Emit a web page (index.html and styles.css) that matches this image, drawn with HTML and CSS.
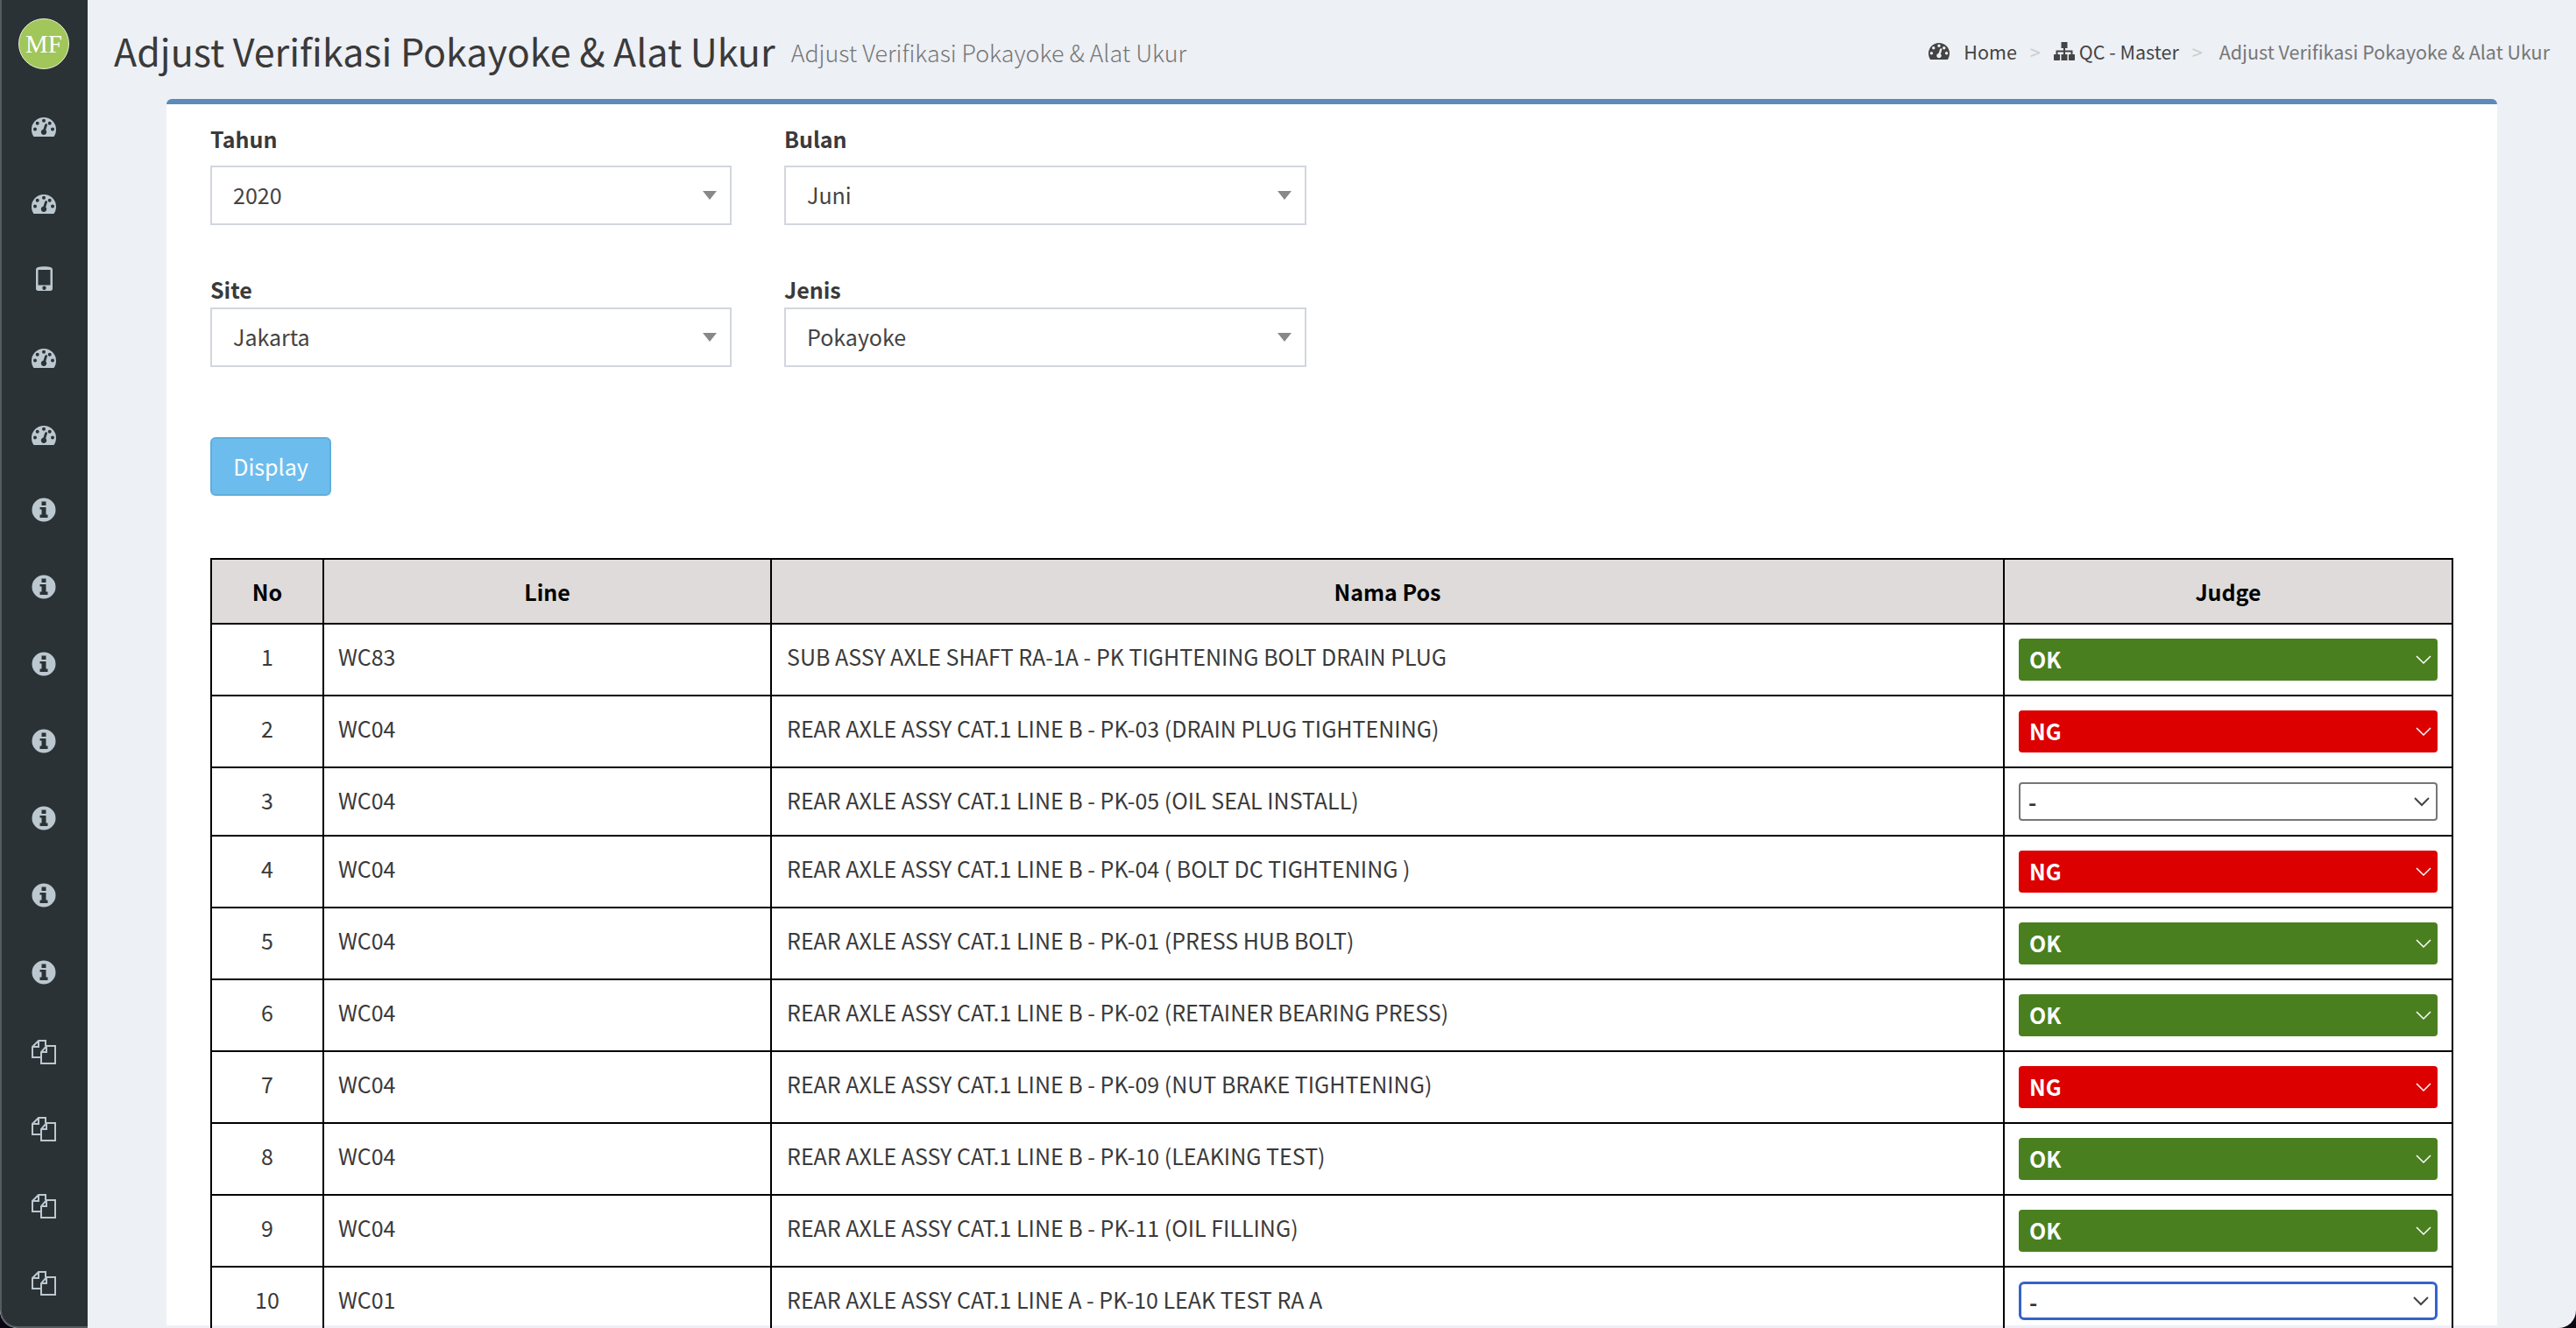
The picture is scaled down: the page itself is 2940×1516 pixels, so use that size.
FILE: index.html
```html
<!DOCTYPE html>
<html lang="en">
<head>
  <meta charset="UTF-8" />
  <title>Adjust Verifikasi Pokayoke &amp; Alat Ukur</title>
  <link rel="stylesheet" href="styles.css">
</head>
<body>

  <svg class="icon-defs" aria-hidden="true">
    <symbol id="i-gauge" viewBox="0 0 28 22">
      <path fill-rule="evenodd" d="M2.5 22C1 20 0 17 0 14A14 14 0 0 1 28 14C28 17 27 20 25.500 22ZM2 13.600a2 2 0 1 0 4 0a2 2 0 1 0-4 0ZM4.700 6.700a2 2 0 1 0 4 0a2 2 0 1 0-4 0ZM12 3.700a2 2 0 1 0 4 0a2 2 0 1 0-4 0ZM18.700 6.700a2 2 0 1 0 4 0a2 2 0 1 0-4 0ZM22 13.600a2 2 0 1 0 4 0a2 2 0 1 0-4 0ZM15.300 8L13.400 13.800C12 14.100 10.800 15.200 10.800 16.800C10.800 18.600 12.200 20 14 20C15.800 20 17.200 18.600 17.200 16.800C17.200 15.900 16.800 15.100 16.200 14.500L18 8.400C18.200 7 15.700 6.700 15.300 8Z"/>
    </symbol>
    <symbol id="i-phone" viewBox="0 0 19 28">
      <path fill-rule="evenodd" d="M2.500 1C5 0 14 0 16.500 1C18 1.400 19 2.400 19 4V25.500C19 27 18 28 16.500 28H2.500C1 28 0 27 0 25.500V4C0 2.400 1 1.400 2.500 1ZM2.500 4V21.500H16.500V4ZM7.300 24.700a2.200 2.200 0 1 0 4.400 0a2.200 2.200 0 1 0-4.400 0Z"/>
    </symbol>
    <symbol id="i-info" viewBox="0 0 28 28">
      <path fill-rule="evenodd" d="M14 .5a13.500 13.500 0 1 1 0 27a13.500 13.500 0 1 1 0-27ZM11.500 4.500V9H16.500V4.500ZM9.500 11V13.500H11.500V19.500H9.500V23H18.500V19.500H16.500V11Z"/>
    </symbol>
    <symbol id="i-copy" viewBox="0 0 28 28">
      <path fill="none" stroke="currentColor" stroke-width="2" d="M10 20H1V8L8 1H16V7M8 1V8H1M17 7H27V27H11V14ZM17 7V14H11"/>
    </symbol>
    <symbol id="i-sitemap" viewBox="0 0 24 21">
      <path d="M8.500 0H15.500V7H13V9.500H21.500V14H23C23.600 14 24 14.400 24 15V20C24 20.600 23.600 21 23 21H18C17.400 21 17 20.600 17 20V15C17 14.400 17.400 14 18 14H19.500V11.500H13V14H15.500V21H8.500V14H11V11.500H4.500V14H6C6.600 14 7 14.400 7 15V20C7 20.600 6.600 21 6 21H1C.4 21 0 20.600 0 20V15C0 14.400 .4 14 1 14H2.500V9.500H11V7H8.500Z"/>
    </symbol>
  </svg>

  <div class="app">
    <aside class="sidebar">
      <div class="avatar">MF</div>
      <nav class="side-nav">
        <a class="side-item"><svg class="side-gauge"><use href="#i-gauge"/></svg></a>
        <a class="side-item"><svg class="side-gauge"><use href="#i-gauge"/></svg></a>
        <a class="side-item side-item-up"><svg class="side-phone"><use href="#i-phone"/></svg></a>
        <a class="side-item"><svg class="side-gauge"><use href="#i-gauge"/></svg></a>
        <a class="side-item"><svg class="side-gauge"><use href="#i-gauge"/></svg></a>
        <a class="side-item side-item-up"><svg class="side-info"><use href="#i-info"/></svg></a>
        <a class="side-item side-item-up"><svg class="side-info"><use href="#i-info"/></svg></a>
        <a class="side-item side-item-up"><svg class="side-info"><use href="#i-info"/></svg></a>
        <a class="side-item side-item-up"><svg class="side-info"><use href="#i-info"/></svg></a>
        <a class="side-item side-item-up"><svg class="side-info"><use href="#i-info"/></svg></a>
        <a class="side-item side-item-up"><svg class="side-info"><use href="#i-info"/></svg></a>
        <a class="side-item side-item-up"><svg class="side-info"><use href="#i-info"/></svg></a>
        <a class="side-item"><svg class="side-info"><use href="#i-copy"/></svg></a>
        <a class="side-item"><svg class="side-info"><use href="#i-copy"/></svg></a>
        <a class="side-item"><svg class="side-info"><use href="#i-copy"/></svg></a>
        <a class="side-item"><svg class="side-info"><use href="#i-copy"/></svg></a>
      </nav>
    </aside>

    <main class="main">
      <header class="page-header">
        <h1 class="page-title">Adjust Verifikasi Pokayoke &amp; Alat Ukur</h1>
        <span class="page-sub">Adjust Verifikasi Pokayoke &amp; Alat Ukur</span>
        <ol class="breadcrumb">
          <li class="crumb"><svg class="crumb-gauge"><use href="#i-gauge"/></svg>Home</li>
          <li class="crumb-sep">&gt;</li>
          <li class="crumb"><svg class="crumb-sitemap"><use href="#i-sitemap"/></svg>QC - Master</li>
          <li class="crumb-sep">&gt;</li>
          <li class="crumb-active">Adjust Verifikasi Pokayoke &amp; Alat Ukur</li>
        </ol>
      </header>

      <section class="card">
        <form class="filter-form">
          <div class="field">
            <label class="field-label field-label-first">Tahun</label>
            <select class="combo"><option>2020</option></select>
          </div>
          <div class="field">
            <label class="field-label field-label-first">Bulan</label>
            <select class="combo"><option>Juni</option></select>
          </div>
          <div class="field">
            <label class="field-label">Site</label>
            <select class="combo"><option>Jakarta</option></select>
          </div>
          <div class="field">
            <label class="field-label">Jenis</label>
            <select class="combo"><option>Pokayoke</option></select>
          </div>
        </form>

        <button class="btn-display" type="button">Display</button>

        <table class="judge-table">
          <colgroup>
            <col class="col-no"><col class="col-line"><col class="col-pos"><col class="col-judge">
          </colgroup>
          <thead>
            <tr><th>No</th><th>Line</th><th>Nama Pos</th><th>Judge</th></tr>
          </thead>
          <tbody>
            <tr>
              <td class="cell-no">1</td><td>WC83</td>
              <td>SUB ASSY AXLE SHAFT RA-1A - PK TIGHTENING BOLT DRAIN PLUG</td>
              <td><select class="judge judge-ok"><option>OK</option></select></td>
            </tr>
            <tr>
              <td class="cell-no">2</td><td>WC04</td>
              <td>REAR AXLE ASSY CAT.1 LINE B - PK-03 (DRAIN PLUG TIGHTENING)</td>
              <td><select class="judge judge-ng"><option>NG</option></select></td>
            </tr>
            <tr>
              <td class="cell-no">3</td><td>WC04</td>
              <td>REAR AXLE ASSY CAT.1 LINE B - PK-05 (OIL SEAL INSTALL)</td>
              <td><select class="judge judge-none"><option>-</option></select></td>
            </tr>
            <tr>
              <td class="cell-no">4</td><td>WC04</td>
              <td>REAR AXLE ASSY CAT.1 LINE B - PK-04 ( BOLT DC TIGHTENING )</td>
              <td><select class="judge judge-ng"><option>NG</option></select></td>
            </tr>
            <tr>
              <td class="cell-no">5</td><td>WC04</td>
              <td>REAR AXLE ASSY CAT.1 LINE B - PK-01 (PRESS HUB BOLT)</td>
              <td><select class="judge judge-ok"><option>OK</option></select></td>
            </tr>
            <tr>
              <td class="cell-no">6</td><td>WC04</td>
              <td>REAR AXLE ASSY CAT.1 LINE B - PK-02 (RETAINER BEARING PRESS)</td>
              <td><select class="judge judge-ok"><option>OK</option></select></td>
            </tr>
            <tr>
              <td class="cell-no">7</td><td>WC04</td>
              <td>REAR AXLE ASSY CAT.1 LINE B - PK-09 (NUT BRAKE TIGHTENING)</td>
              <td><select class="judge judge-ng"><option>NG</option></select></td>
            </tr>
            <tr>
              <td class="cell-no">8</td><td>WC04</td>
              <td>REAR AXLE ASSY CAT.1 LINE B - PK-10 (LEAKING TEST)</td>
              <td><select class="judge judge-ok"><option>OK</option></select></td>
            </tr>
            <tr>
              <td class="cell-no">9</td><td>WC04</td>
              <td>REAR AXLE ASSY CAT.1 LINE B - PK-11 (OIL FILLING)</td>
              <td><select class="judge judge-ok"><option>OK</option></select></td>
            </tr>
            <tr>
              <td class="cell-no">10</td><td>WC01</td>
              <td>REAR AXLE ASSY CAT.1 LINE A - PK-10 LEAK TEST RA A</td>
              <td><select class="judge judge-none judge-focus"><option>-</option></select></td>
            </tr>
          </tbody>
        </table>
      </section>
    </main>
  </div>

</body>
</html>
```

FILE: styles.css
```css
html, body {
  margin: 0;
  height: 100%;
  overflow: hidden;
  background-color: #0a0612;
}

body {
  font-family: "Noto Sans CJK SC", "Noto Sans", sans-serif;
  font-size: 25px;
  line-height: 40px;
  color: #3a3a3a;
}

.icon-defs {
  width: 0;
  height: 0;
  display: block;
}

.app {
  display: flex;
  height: 1516px;
  overflow: hidden;
  border-radius: 0 0 20px 20px;
  background-color: #edf0f5;
}

/* sidebar */
.sidebar {
  width: 100px;
  flex-shrink: 0;
  box-sizing: border-box;
  border-left: 2px solid #555b5f;
  border-bottom: 2px solid #555b5f;
  border-bottom-left-radius: 20px;
  background-color: #2a3235;
  color: #bcc8d0;
}

.avatar {
  box-sizing: border-box;
  width: 58px;
  height: 58px;
  margin: 21px 0 22px 19px;
  border: 1px solid #e6f0d2;
  border-radius: 50%;
  background-color: #a1c65a;
  color: #fff;
  font-family: "Liberation Serif", serif;
  font-size: 29px;
  line-height: 56px;
  text-align: center;
}

.side-item {
  display: flex;
  height: 88px;
  margin-left: -2px;
  align-items: center;
  justify-content: center;
}

.side-item-up svg {
  margin-top: -6px;
}

.side-gauge { width: 28px; height: 22px; fill: currentColor; }
.side-phone { width: 19px; height: 28px; fill: currentColor; }
.side-info { width: 28px; height: 28px; fill: currentColor; }

/* header */
.main {
  flex: 1;
  min-width: 0;
}

.page-header {
  display: flex;
  height: 113px;
  padding: 0 30px;
  box-sizing: border-box;
  align-items: center;
}

.page-title {
  margin: 0 18px 0 0;
  font-size: 43px;
  font-weight: 400;
  line-height: 60px;
}

.page-sub {
  font-size: 26.8px;
  font-weight: 300;
  color: #777;
  margin-top: 7px;
}

.breadcrumb {
  display: flex;
  align-items: center;
  margin: 4px 0 0 auto;
  padding: 0;
  list-style: none;
  font-size: 21.5px;
  color: #444;
}

.crumb {
  display: flex;
  align-items: center;
}

.crumb-gauge {
  width: 24px;
  height: 19px;
  margin-right: 16px;
  fill: currentColor;
}

.crumb-sitemap {
  width: 24px;
  height: 21px;
  margin-right: 5px;
  fill: currentColor;
}

.crumb-sep {
  margin: 0 15px;
  color: #ccc;
}

.crumb-active {
  margin-left: 4px;
  color: #777;
}

/* card */
.card {
  margin: 0 90px;
  padding: 19px 50px 0;
  height: 1400px;
  box-sizing: border-box;
  border-top: 6px solid #5b8abb;
  border-radius: 6px 6px 0 0;
  background-color: #fff;
}

.filter-form {
  display: grid;
  grid-template-columns: 595px 596px;
  column-gap: 60px;
  row-gap: 53px;
  width: 1251px;
}

.field-label {
  display: block;
  margin-bottom: 1px;
  font-weight: 700;
}

.field-label-first {
  margin-bottom: 11px;
}

.combo {
  display: block;
  width: 100%;
  height: 68px;
  padding: 0 24px 2px;
  border: 2px solid #d2d6de;
  border-radius: 0;
  font: inherit;
  color: #444;
  appearance: none;
  background: #fff url("data:image/svg+xml,%3Csvg xmlns='http://www.w3.org/2000/svg' viewBox='0 0 16 10'%3E%3Cpath fill='%23888' d='M0 0h16L8 10z'/%3E%3C/svg%3E") no-repeat right 15px center / 16px 10px;
}

.btn-display {
  display: block;
  width: 138px;
  height: 67px;
  margin-top: 80px;
  padding-bottom: 3px;
  border: 2px solid #62add9;
  border-radius: 6px;
  background-color: #6cbdee;
  color: #fff;
  font: inherit;
}

/* table */
.judge-table {
  width: 2558px;
  margin-top: 71px;
  border-collapse: collapse;
  table-layout: fixed;
}

.col-no { width: 128px; }
.col-line { width: 511px; }
.col-pos { width: 1407px; }
.col-judge { width: 512px; }

.judge-table th,
.judge-table td {
  padding: 16px;
  border: 2px solid #000;
  vertical-align: top;
}

.judge-table th {
  background-color: #dedbda;
  color: #000;
  font-weight: 700;
  text-align: center;
}

.judge-table td:nth-child(3) {
  padding-left: 17px;
}

.cell-no {
  text-align: center;
}

.judge {
  display: block;
  width: 100%;
  height: 48px;
  padding: 0 12px 2px;
  border: 0;
  border-radius: 4px;
  font: inherit;
  font-weight: 700;
  appearance: none;
  background-repeat: no-repeat;
  background-position: right 7px center;
  background-size: 18px 11px;
}

.judge-ok {
  background-color: #4a7f1f;
  color: #fff;
  background-image: url("data:image/svg+xml,%3Csvg xmlns='http://www.w3.org/2000/svg' viewBox='0 0 18 11'%3E%3Cpath fill='none' stroke='%23fff' stroke-width='1.500' d='M1 1l8 8 8-8'/%3E%3C/svg%3E");
}

.judge-ng {
  background-color: #dc0000;
  color: #fff;
  background-image: url("data:image/svg+xml,%3Csvg xmlns='http://www.w3.org/2000/svg' viewBox='0 0 18 11'%3E%3Cpath fill='none' stroke='%23fff' stroke-width='1.500' d='M1 1l8 8 8-8'/%3E%3C/svg%3E");
}

.judge-none {
  height: 44px;
  padding: 0 9px 2px;
  border: 2px solid #767676;
  background-color: #fff;
  color: #333;
  background-image: url("data:image/svg+xml,%3Csvg xmlns='http://www.w3.org/2000/svg' viewBox='0 0 18 11'%3E%3Cpath fill='none' stroke='%23444' stroke-width='2' d='M1 1l8 8 8-8'/%3E%3C/svg%3E");
}

.judge-focus {
  border: 3px solid #3563c9;
  border-radius: 6px;
}
```
